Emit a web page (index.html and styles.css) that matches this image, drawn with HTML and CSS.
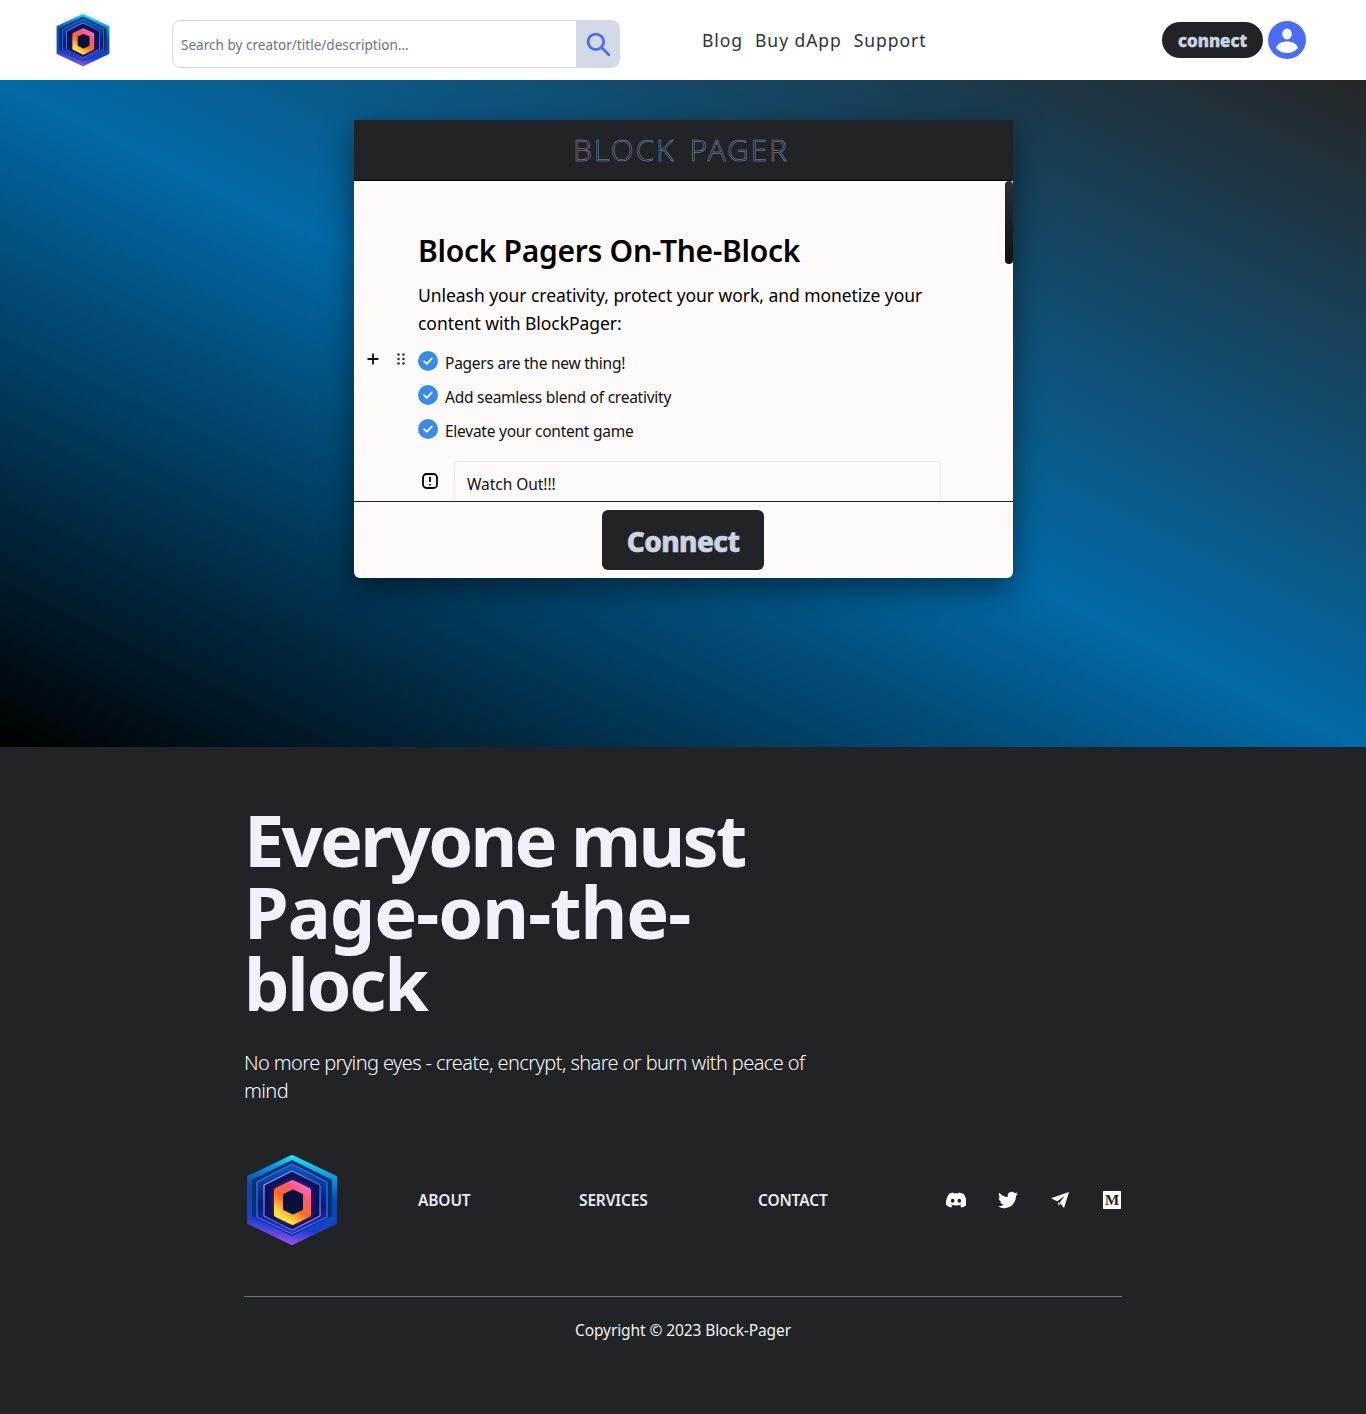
FILE: index.html
```html
<!DOCTYPE html>
<html lang="en">
<head>
<meta charset="utf-8">
<title>Block Pager</title>
<link rel="stylesheet" href="styles.css">
</head>
<body>
<svg class="defs" aria-hidden="true">
  <defs>
    <linearGradient id="g-edge" x1="0.6" y1="0" x2="0.4" y2="1">
      <stop offset="0" stop-color="#1ef0fa"/><stop offset="0.16" stop-color="#0a9ae0"/><stop offset="0.42" stop-color="#0a4aa8"/><stop offset="0.8" stop-color="#1a3fd0"/><stop offset="1" stop-color="#a050f0"/>
    </linearGradient>
    <linearGradient id="g-mid" x1="0" y1="0" x2="0" y2="1">
      <stop offset="0" stop-color="#0d5ac0"/><stop offset="0.6" stop-color="#081a78"/><stop offset="1" stop-color="#3a2fe0"/>
    </linearGradient>
    <linearGradient id="g-line" x1="0" y1="0" x2="1" y2="1">
      <stop offset="0" stop-color="#c8d4ff"/><stop offset="0.6" stop-color="#5070e8"/><stop offset="1" stop-color="#f0b0ff"/>
    </linearGradient>
    <linearGradient id="g-ring2" x1="0.9" y1="0" x2="0.3" y2="1">
      <stop offset="0" stop-color="#fa70e0"/><stop offset="0.3" stop-color="#ff5a70"/><stop offset="0.6" stop-color="#ff6a28"/><stop offset="0.92" stop-color="#ffe040"/>
    </linearGradient>
    <filter id="g-glow" x="-40%" y="-40%" width="180%" height="180%"><feGaussianBlur stdDeviation="3"/></filter>
    <symbol id="logo" viewBox="0 0 92 92">
      <polygon points="46,2 90,23 90,69 46,90 2,69 2,23" fill="url(#g-edge)" stroke="url(#g-edge)" stroke-width="2" stroke-linejoin="round"/>
      <polygon points="46,6 86,26 86,62 46,82 6,62 6,26" fill="#06306e"/>
      <polygon points="46,10 81,28 81,63 46,80 11,63 11,28" fill="url(#g-mid)" stroke="#2e78f0" stroke-width="1.2" stroke-linejoin="round"/>
      <polygon points="46,17 74,31 74,62 46,76 18,62 18,31" fill="#0a1260" stroke="url(#g-line)" stroke-width="1" stroke-linejoin="round"/>
      <polygon points="46.500,28 63,36 63,61 46.500,69 30,61 30,36" fill="#ff6a40" filter="url(#g-glow)" opacity="0.7"/>
      <polygon points="46.500,28 63,36 63,61 46.500,69 30,61 30,36" fill="url(#g-ring2)" stroke="url(#g-ring2)" stroke-width="4" stroke-linejoin="round"/>
      <polygon points="47,37 55.500,41 55.500,55 47,59 38.500,55 38.500,41" fill="#071238" stroke="#071238" stroke-width="3" stroke-linejoin="round"/>
    </symbol>
  </defs>
</svg>

<header class="topbar">
  <svg class="brand-logo"><use href="#logo"/></svg>
  <form class="search">
    <span class="search-text">Search by creator/title/description...</span>
    <span class="search-btn">
      <svg viewBox="0 0 24 24" width="26" height="26" fill="none" stroke="#4a6cf7" stroke-width="2.6" stroke-linecap="round"><circle cx="10" cy="10" r="7.2"/><path d="M15.5 15.5 22 22"/></svg>
    </span>
  </form>
  <nav class="menu">
    <a>Blog</a>
    <a>Buy dApp</a>
    <a>Support</a>
  </nav>
  <div class="account">
    <span class="pill">connect</span>
    <svg class="avatar" viewBox="0 0 38 38"><circle cx="19" cy="19" r="19" fill="#4a6cf7"/><ellipse cx="19" cy="13" rx="4.8" ry="5.4" fill="#fff"/><path d="M8 27c1.5-4.5 6-6.5 11-6.5S28.500 22.500 30 27c-2.500 3-6.500 5-11 5s-8.500-2-11-5z" fill="#fff"/></svg>
  </div>
</header>

<section class="hero">
  <article class="card">
    <h2 class="card-head">BLOCK PAGER</h2>
    <div class="card-body">
      <h1 class="card-title">Block Pagers On-The-Block</h1>
      <p class="card-lead">Unleash your creativity, protect your work, and monetize your content with BlockPager:</p>
      <ul class="checks">
        <li class="check">
          <span class="tools">
            <svg viewBox="0 0 14 14" width="14" height="14" fill="none" stroke="#111" stroke-width="1.800"><path d="M7 1.500v11M1.500 7h11"/></svg>
            <svg viewBox="0 0 10 14" width="10" height="14" fill="#333"><circle cx="2.500" cy="2.500" r="1.300"/><circle cx="7.500" cy="2.500" r="1.300"/><circle cx="2.500" cy="7" r="1.300"/><circle cx="7.500" cy="7" r="1.300"/><circle cx="2.500" cy="11.500" r="1.300"/><circle cx="7.500" cy="11.500" r="1.300"/></svg>
          </span>
          <svg class="tick" viewBox="0 0 20 20"><circle cx="10" cy="10" r="10" fill="#3b8ae6"/><path d="M6.200 10.300 8.800 12.800 13.800 7.500" fill="none" stroke="#fff" stroke-width="1.800" stroke-linecap="round" stroke-linejoin="round"/></svg>
          <span>Pagers are the new thing!</span>
        </li>
        <li class="check">
          <svg class="tick" viewBox="0 0 20 20"><circle cx="10" cy="10" r="10" fill="#3b8ae6"/><path d="M6.200 10.300 8.800 12.800 13.800 7.500" fill="none" stroke="#fff" stroke-width="1.800" stroke-linecap="round" stroke-linejoin="round"/></svg>
          <span>Add seamless blend of creativity</span>
        </li>
        <li class="check">
          <svg class="tick" viewBox="0 0 20 20"><circle cx="10" cy="10" r="10" fill="#3b8ae6"/><path d="M6.200 10.300 8.800 12.800 13.800 7.500" fill="none" stroke="#fff" stroke-width="1.800" stroke-linecap="round" stroke-linejoin="round"/></svg>
          <span>Elevate your content game</span>
        </li>
      </ul>
      <div class="callout">
        <svg class="alert" viewBox="0 0 16 16" width="16" height="16" fill="none" stroke="#000" stroke-width="1.800"><rect x="1" y="1" width="14" height="14" rx="3.500"/><path d="M8 4v5M8 11v1.400"/></svg>
        <div class="callout-box">Watch Out!!!</div>
      </div>
      <span class="thumb"></span>
    </div>
    <div class="card-foot">
      <button class="connect" type="button">Connect</button>
    </div>
  </article>
</section>

<footer class="footer">
  <div class="footer-inner">
    <h2 class="claim"><span class="claim-first">Everyone must</span> <span class="claim-second">Page-on-the-</span> <span class="claim-third">block</span></h2>
    <p class="sub">No more prying eyes - create, encrypt, share or burn with peace of mind</p>
    <div class="foot-row">
      <svg class="foot-logo"><use href="#logo"/></svg>
      <nav class="foot-links">
        <a>ABOUT</a>
        <a>SERVICES</a>
        <a>CONTACT</a>
      </nav>
      <div class="socials">
        <svg viewBox="0 0 24 24" width="20" height="20" fill="#fff"><path d="M20.317 4.370a19.791 19.791 0 0 0-4.885-1.515c-.21.375-.444.864-.608 1.250a18.270 18.270 0 0 0-5.487 0 12.640 12.640 0 0 0-.617-1.250A19.736 19.736 0 0 0 3.677 4.370C.533 9.046-.320 13.580.099 18.057a19.900 19.900 0 0 0 5.993 3.030c.462-.630 1.300-1.850 1.600-2.400-.8-.3-1.300-.6-1.900-1l.5-.4c3.928 1.793 8.180 1.793 12.062 0l.5.4c-.6.4-1.100.7-1.900 1 .3.550 1.150 1.770 1.600 2.400a19.839 19.839 0 0 0 6.002-3.030c.5-5.177-.838-9.674-3.549-13.660zM8.020 15.330c-1.183 0-2.157-1.085-2.157-2.419 0-1.333.956-2.419 2.157-2.419 1.210 0 2.176 1.096 2.157 2.420 0 1.333-.956 2.418-2.157 2.418zm7.975 0c-1.183 0-2.157-1.085-2.157-2.419 0-1.333.955-2.419 2.157-2.419 1.210 0 2.176 1.096 2.157 2.420 0 1.333-.946 2.418-2.157 2.418z"/></svg>
        <svg viewBox="0 0 24 24" width="20" height="20" fill="#fff"><path d="M23.953 4.570a10 10 0 0 1-2.825.775 4.958 4.958 0 0 0 2.163-2.723c-.951.555-2.005.959-3.127 1.184a4.920 4.920 0 0 0-8.384 4.482C7.690 8.095 4.067 6.130 1.640 3.162a4.822 4.822 0 0 0-.666 2.475c0 1.710.870 3.213 2.188 4.096a4.904 4.904 0 0 1-2.228-.616v.060a4.923 4.923 0 0 0 3.946 4.827 4.996 4.996 0 0 1-2.212.085 4.936 4.936 0 0 0 4.604 3.417 9.867 9.867 0 0 1-6.102 2.105c-.390 0-.779-.023-1.170-.067a13.995 13.995 0 0 0 7.557 2.209c9.053 0 13.998-7.496 13.998-13.985 0-.210 0-.420-.015-.630A9.935 9.935 0 0 0 24 4.590z"/></svg>
        <svg viewBox="0 0 20 20" width="20" height="20" fill="#fff"><path d="M1 8.300 19 2l-5 16-4.300-5.300L14.500 6 7.300 11.200z"/><path d="M7.800 12.200 8.600 15.600 10.300 13.800z"/></svg>
        <span class="medium">M</span>
      </div>
    </div>
    <p class="copyright">Copyright © 2023 Block-Pager</p>
  </div>
</footer>
</body>
</html>
```

FILE: styles.css
```css
* { box-sizing: border-box; }
html, body { margin: 0; padding: 0; }
body { font-family: "Noto Sans", "Open Sans", sans-serif; color: #000; background: #212327; }
h1, h2, p, ul { margin: 0; padding: 0; }
.defs { position: absolute; width: 0; height: 0; }

.topbar { height: 80px; background: #fff; display: flex; align-items: center; padding: 0 60px 0 56px; }
.brand-logo { width: 54px; height: 54px; flex: none; margin-right: 62px; }
.search { width: 448px; height: 48px; flex: none; align-self: flex-start; margin-top: 20px; display: flex; border: 1px solid #d3d9e5; border-radius: 8px; overflow: hidden; background: #fff; }
.search-text { flex: 1; align-self: center; padding-left: 8px; padding-top: 1px; font-size: 13.500px; letter-spacing: 0.03px; color: #6b7280; }
.search-btn { width: 43px; background: #d3d9e5; display: flex; align-items: center; justify-content: center; }
.menu { display: flex; gap: 12px; margin-left: 82px; font-size: 17.500px; letter-spacing: 0.95px; color: #2b3340; }
.account { margin-left: auto; display: flex; align-items: center; gap: 5px; }
.pill { width: 101px; height: 36px; border-radius: 18px; background: #212327; color: #cbd5e1; display: flex; align-items: center; justify-content: center; font-size: 17px; font-weight: 800; -webkit-text-stroke: 0.5px #cbd5e1; }
.avatar { width: 38px; height: 38px; flex: none; }

.hero { height: 667px; padding-top: 40px; background: linear-gradient(to top right, #000 0%, #026aa7 50%, #262626 100%); }
.card { width: 659px; height: 458px; margin-left: 354px; display: flex; flex-direction: column; background: #fffafa; border-radius: 0 0 6px 6px; box-shadow: 0 10px 30px rgba(0, 0, 0, 0.5); overflow: hidden; }
.card-head { height: 61px; flex: none; background: #212327; border-bottom: 1px solid #000; display: flex; align-items: center; justify-content: center; font-size: 30px; font-weight: 300; letter-spacing: 1.9px; word-spacing: 4px; color: transparent; -webkit-text-stroke: 0.5px #8296bc; padding-right: 5px; padding-bottom: 2px; }
.card-body { position: relative; height: 320px; flex: none; overflow: hidden; padding: 50px 64px 0; }
.card-title { font-size: 30px; line-height: 40px; font-weight: 600; letter-spacing: -0.28px; color: #000; }
.card-lead { margin-top: 10px; width: 530px; font-size: 17.500px; line-height: 28px; letter-spacing: -0.05px; color: #000; }
.checks { list-style: none; margin-top: 14px; }
.check { position: relative; display: flex; align-items: flex-start; gap: 7px; height: 34px; font-size: 15.500px; line-height: 24px; letter-spacing: -0.25px; color: #111; }
.tick { width: 20px; height: 20px; flex: none; }
.tools { position: absolute; left: -52px; top: 1px; width: 44px; display: flex; justify-content: space-between; padding-right: 4px; }
.callout { display: flex; align-items: flex-start; gap: 16px; margin-top: 8px; padding-left: 4px; }
.alert { margin-top: 12px; flex: none; }
.callout-box { width: 487px; height: 70px; padding: 10px 12px; border: 1px solid #ece8e6; border-radius: 4px; font-size: 15.500px; line-height: 24px; letter-spacing: -0.05px; color: #111; }
.thumb { position: absolute; top: 0; right: 0; width: 8px; height: 83px; border-radius: 4px; background: linear-gradient(to bottom, #2a3038, #0c0f16); }
.card-foot { flex: 1; border-top: 1px solid #212327; display: flex; justify-content: center; padding-top: 8px; padding-right: 1px; }
.connect { width: 162px; height: 60px; border: 0; border-radius: 6px; background: #212327; color: #cbd5e1; font-family: inherit; font-size: 28px; font-weight: 800; letter-spacing: -0.6px; -webkit-text-stroke: 0.6px #cbd5e1; padding: 2px 0 0; }

.footer { height: 667px; background: #212327; }
.footer-inner { width: 878px; margin-left: 244px; padding-top: 56px; }
.claim { width: 560px; font-size: 72px; line-height: 72px; font-weight: 700; color: #f1f1fb; }
.claim-first, .claim-second, .claim-third { display: block; }
.claim-first { letter-spacing: -2.7px; }
.claim-second { letter-spacing: -1px; }
.claim-third { letter-spacing: -2.2px; }
.sub { margin-top: 30px; width: 590px; font-size: 20px; line-height: 28px; font-weight: 300; letter-spacing: -0.6px; color: #f8f8f8; }
.foot-row { display: flex; align-items: center; margin-top: 49px; padding-left: 2px; }
.foot-logo { width: 92px; height: 92px; flex: none; margin-right: 80px; }
.foot-links { display: flex; font-size: 15.500px; font-weight: 600; letter-spacing: -0.15px; color: #e8eaef; }
.foot-links a:nth-child(1) { width: 161px; }
.foot-links a:nth-child(2) { width: 179px; }
.socials { margin-left: auto; display: flex; gap: 32px; align-items: center; }
.medium { width: 18px; height: 18px; margin: 0 1px; background: #fff; color: #212327; font-family: "Liberation Serif", serif; font-weight: 700; font-size: 15px; line-height: 18px; text-align: center; }
.copyright { margin-top: 50px; padding-top: 21px; border-top: 1px solid #6b7280; text-align: center; font-size: 15.500px; line-height: 24px; letter-spacing: -0.1px; color: #f1f1f1; }
```
